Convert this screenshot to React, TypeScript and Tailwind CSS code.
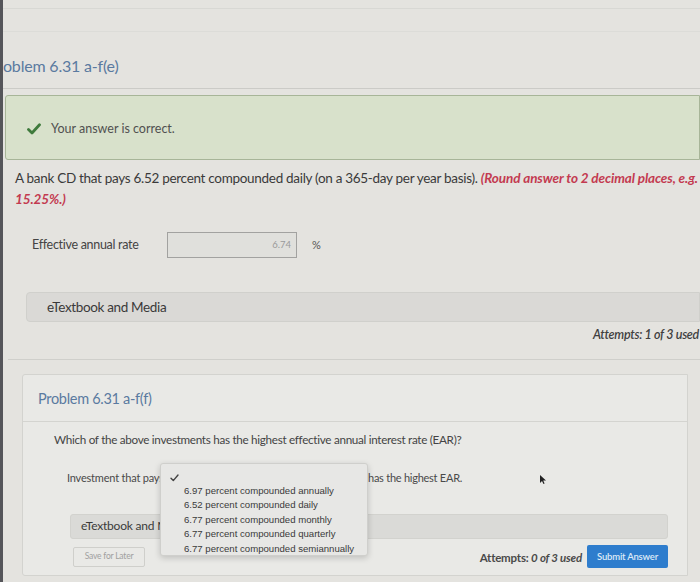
import React from 'react';

const options = [
  '6.97 percent compounded annually',
  '6.52 percent compounded daily',
  '6.77 percent compounded monthly',
  '6.77 percent compounded quarterly',
  '6.77 percent compounded semiannually',
];

export default function App() {
  return (
    <div className="relative w-[700px] h-[582px] overflow-hidden bg-[#e4e3df] border-l-[3px] border-[#55555a] font-['Lato',sans-serif] text-[#3c3c3c]">
      {/* Page header */}
      <div className="h-[89px] border-b border-[#cbcbc7]">
        <div className="h-[9px] border-b border-[#d8d8d4]" />
        <div className="h-[23px] border-b border-[#dcdcd8]" />
        <h1 className="mt-[24px] text-[16px] leading-[20px] text-[#5a7aa0] tracking-[-0.2px]">oblem 6.31 a-f(e)</h1>
      </div>

      {/* Part e */}
      <div>
        <div className="mt-[6px] ml-[2px] h-[65px] flex items-center pt-[3px] bg-[#d8e1cb] border border-[#a7b598] rounded-l-[3px]">
          <svg width="14" height="12" viewBox="0 0 14 12" className="ml-[21px]">
            <path d="M1.5 6.5 L5 10 L12.5 1.8" fill="none" stroke="#3f7a3c" strokeWidth="2.8" strokeLinecap="round" strokeLinejoin="round" />
          </svg>
          <span className="ml-[10px] text-[12.5px] text-[#505050]">Your answer is correct.</span>
        </div>

        <p className="mt-[8px] pl-[12px] pr-[2px] text-[13.5px] leading-[21px] tracking-[-0.3px] text-[#3a3a3a]">
          A bank CD that pays 6.52 percent compounded daily (on a 365-day per year basis).{' '}
          <span className="italic font-bold text-[#c33a50] tracking-[-0.1px]">(Round answer to 2 decimal places, e.g. 15.25%.)</span>
        </p>

        <div className="mt-[22px] flex items-center">
          <span className="ml-[29px] w-[135px] text-[12.5px] tracking-[-0.3px] text-[#444]">Effective annual rate</span>
          <div className="w-[130px] h-[26px] bg-[#e0e0dc] border border-[#a2a2a0] flex items-center justify-end pr-[5px] text-[9.5px] text-[#9a9a9a]">6.74</div>
          <span className="ml-[15px] text-[11px] text-[#555]">%</span>
        </div>

        <div className="mt-[34px] ml-[23px] h-[30px] flex items-center bg-[#dad9d6] border border-[#d0d0cc] rounded-l-[4px]">
          <span className="ml-[20px] text-[13.5px] tracking-[-0.35px] text-[#3a3a3a]">eTextbook and Media</span>
        </div>

        <div className="mt-[4px] flex justify-end mr-[1px]">
          <span className="text-[12.5px] italic font-semibold text-[#3f3f3f] tracking-[-0.3px]">Attempts: 1 of 3 used</span>
        </div>
      </div>

      <div className="mt-[14px] ml-[5px] border-t border-[#cfcfcb]" />

      {/* Part f */}
      <div className="mt-[14px] ml-[19px] mr-[12px] bg-[#e9e9e6] border border-[#d3d3cf] rounded-l-[3px]">
        <div className="h-[47px] border-b border-[#d4d4d0] flex items-center pl-[15px] pt-[2px]">
          <h2 className="text-[14.5px] text-[#5a7aa0] tracking-[-0.3px]">Problem 6.31 a-f(f)</h2>
        </div>

        <p className="mt-[9px] pl-[31px] text-[11.7px] leading-[16px] tracking-[-0.3px] text-[#444]">
          Which of the above investments has the highest effective annual interest rate (EAR)?
        </p>

        <div className="mt-[19px] flex items-center h-[24px]">
          <span className="ml-[44px] w-[94px] whitespace-nowrap text-[11px] tracking-[-0.2px] text-[#4a4a4a]">Investment that pays</span>
          <div className="w-[205px] h-[24px] bg-[#e6e6e3] border border-[#c8c8c4] rounded-[2px]" />
          <span className="ml-[2px] text-[11px] tracking-[-0.25px] text-[#4a4a4a]">has the highest EAR.</span>
        </div>

        <div className="mt-[24px] ml-[47px] mr-[19px] h-[25px] flex items-center bg-[#dadad7] border border-[#d2d2ce] rounded-[3px]">
          <span className="ml-[10px] text-[12px] tracking-[-0.2px] text-[#3a3a3a]">eTextbook and Media</span>
        </div>

        <div className="mt-[6px] ml-[50px] mr-[19px] flex items-center h-[24px]">
          <div className="w-[72px] h-[20px] border border-[#cfcfcb] rounded-[2px] flex items-center justify-center text-[8.5px] text-[#a0a0a0] tracking-[-0.2px]">Save for Later</div>
          <div className="flex-1" />
          <span className="mt-[2px] text-[11.5px] font-bold text-[#4a4a4a] tracking-[-0.2px]">Attempts: <span className="italic">0 of 3 used</span></span>
          <div className="ml-[5px] w-[81px] h-[23px] bg-[#2e7dcd] rounded-[2px] flex items-center justify-center text-[9.5px] font-semibold text-[#dce9f7] tracking-[-0.2px]">Submit Answer</div>
        </div>
        <div className="h-[6px]" />
      </div>

      {/* Open dropdown list */}
      <div className="absolute left-[157px] top-[463px] w-[208px] h-[93px] bg-[#e7e7e5] border border-[#cfcfcc] rounded-[3px] shadow-[0_2px_6px_rgba(0,0,0,0.18)] font-['Liberation_Sans',Arial,sans-serif]">
        <svg width="9" height="8" viewBox="0 0 9 8" className="absolute left-[9px] top-[10px]">
          <path d="M1 4.2 L3.3 6.6 L8 1" fill="none" stroke="#444" strokeWidth="1.4" strokeLinecap="round" strokeLinejoin="round" />
        </svg>
        <ul className="pt-[20px] pl-[23px] text-[9.6px] leading-[14.4px] text-[#3a3a3a]">
          {options.map((o) => (
            <li key={o}>{o}</li>
          ))}
        </ul>
      </div>

      {/* Mouse pointer */}
      <svg width="8" height="11" viewBox="0 0 8 11" className="absolute left-[536px] top-[474px]">
        <path d="M1 1 L1 9 L3 7 L4.5 10 L5.6 9.4 L4.2 6.6 L7 6.4 Z" fill="#222" />
      </svg>
    </div>
  );
}
